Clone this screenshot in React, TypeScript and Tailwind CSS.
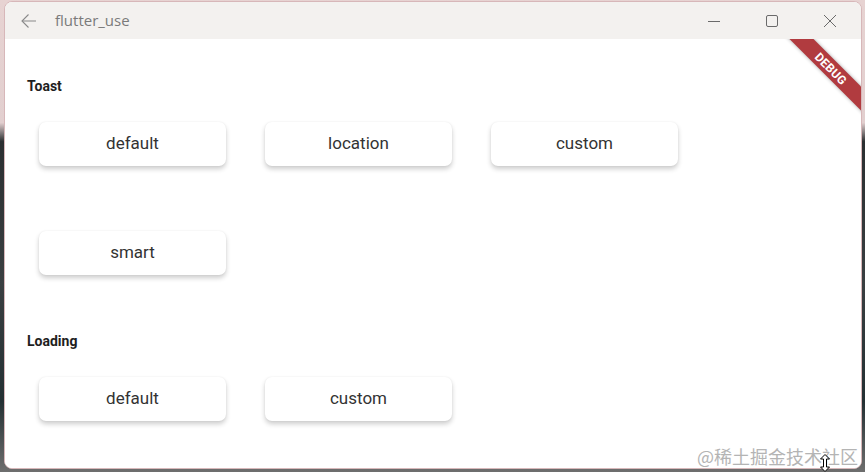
import React from "react";

const font = { fontFamily: "Roboto, 'Noto Sans', sans-serif" };

function Btn({ label }: { label: string }) {
  return (
    <div className="w-[187px] h-[44px] rounded-[7px] bg-white flex items-center justify-center text-[17px] text-[#333333] shadow-[0_3px_5px_rgba(0,0,0,0.2),0_0_2px_rgba(0,0,0,0.06)]">
      {label}
    </div>
  );
}

export default function App() {
  return (
    <div
      className="w-[865px] h-[472px] overflow-hidden relative bg-[linear-gradient(180deg,#e7d3d2_0%,#e2cfcf_26%,#2b2f31_30%,#3a3f41_60%,#243033_85%,#6e6e6e_100%)] pl-[4px] pr-[3px] pt-[1px] pb-[3px]"
      style={font}
    >
      <div className="w-full h-full rounded-[8px] border border-[#d7b7b9] overflow-hidden flex flex-col bg-white">
        {/* Title bar */}
        <div className="h-[37px] shrink-0 bg-[#f3f1ef] flex items-center relative">
          <svg className="ml-[15px]" width="18" height="18" viewBox="0 0 18 18" fill="none" stroke="#8a8a8a" strokeWidth="1.1">
            <path d="M2 9 H16" />
            <path d="M8.5 2.5 L2 9 L8.5 15.5" />
          </svg>
          <span className="ml-[17px] text-[15px] text-[#7a7a7a]" style={{ fontFamily: "'Segoe UI', 'Open Sans', 'Noto Sans', sans-serif" }}>
            flutter_use
          </span>
          <div className="ml-auto flex items-center h-full">
            <div className="w-[58px] flex justify-center">
              <svg width="14" height="14" viewBox="0 0 14 14" fill="none" stroke="#6a6a6a" strokeWidth="1">
                <path d="M1 7.5 H13" />
              </svg>
            </div>
            <div className="w-[58px] flex justify-center">
              <svg width="14" height="14" viewBox="0 0 14 14" fill="none" stroke="#6a6a6a" strokeWidth="1">
                <rect x="1.5" y="1.5" width="11" height="11" rx="1.5" />
              </svg>
            </div>
            <div className="w-[58px] flex justify-center mr-[2px]">
              <svg width="14" height="14" viewBox="0 0 14 14" fill="none" stroke="#6a6a6a" strokeWidth="1">
                <path d="M1 1 L13 13 M13 1 L1 13" />
              </svg>
            </div>
          </div>
        </div>

        {/* Content */}
        <div className="flex-1 relative bg-white">
          <div className="pt-[39px] pl-[22px]">
            <div className="text-[14px] leading-[17px] font-bold text-[#1e1e1e]">Toast</div>
            <div className="mt-[27px] ml-[12px] flex flex-col gap-[65px]">
              <div className="flex gap-[39px]">
                <Btn label="default" />
                <Btn label="location" />
                <Btn label="custom" />
              </div>
              <div className="flex gap-[39px]">
                <Btn label="smart" />
              </div>
            </div>
            <div className="mt-[58px] text-[14px] leading-[17px] font-bold text-[#1e1e1e]">Loading</div>
            <div className="mt-[27px] ml-[12px] flex gap-[39px]">
              <Btn label="default" />
              <Btn label="custom" />
            </div>
          </div>

          {/* Debug banner */}
          <div className="absolute top-0 right-0 w-[100px] h-[100px] overflow-hidden pointer-events-none">
            <div className="absolute left-[0px] top-[21px] w-[140px] h-[17px] bg-[#b13b3f] rotate-45 flex items-center justify-center shadow-[0_0_4px_rgba(0,0,0,0.35)]">
              <span className="text-white text-[12px] font-bold tracking-[0.2px] leading-none">DEBUG</span>
            </div>
          </div>

          {/* Watermark */}
          <div
            className="absolute right-[3px] bottom-[3px] text-[18px] leading-none text-[#b4b4b4]"
            style={{ fontFamily: "'Noto Sans CJK SC', sans-serif" }}
          >
            @稀土掘金技术社区
          </div>
        </div>
      </div>
      {/* cursor */}
      <svg className="absolute left-[819px] top-[454px]" width="12" height="18" viewBox="0 0 12 18" fill="#fff" stroke="#000" strokeWidth="1">
        <path d="M6 0.5 L10.5 5 L7.5 5 L7.5 13 L10.5 13 L6 17.5 L1.5 13 L4.5 13 L4.5 5 L1.5 5 Z" />
      </svg>
    </div>
  );
}
